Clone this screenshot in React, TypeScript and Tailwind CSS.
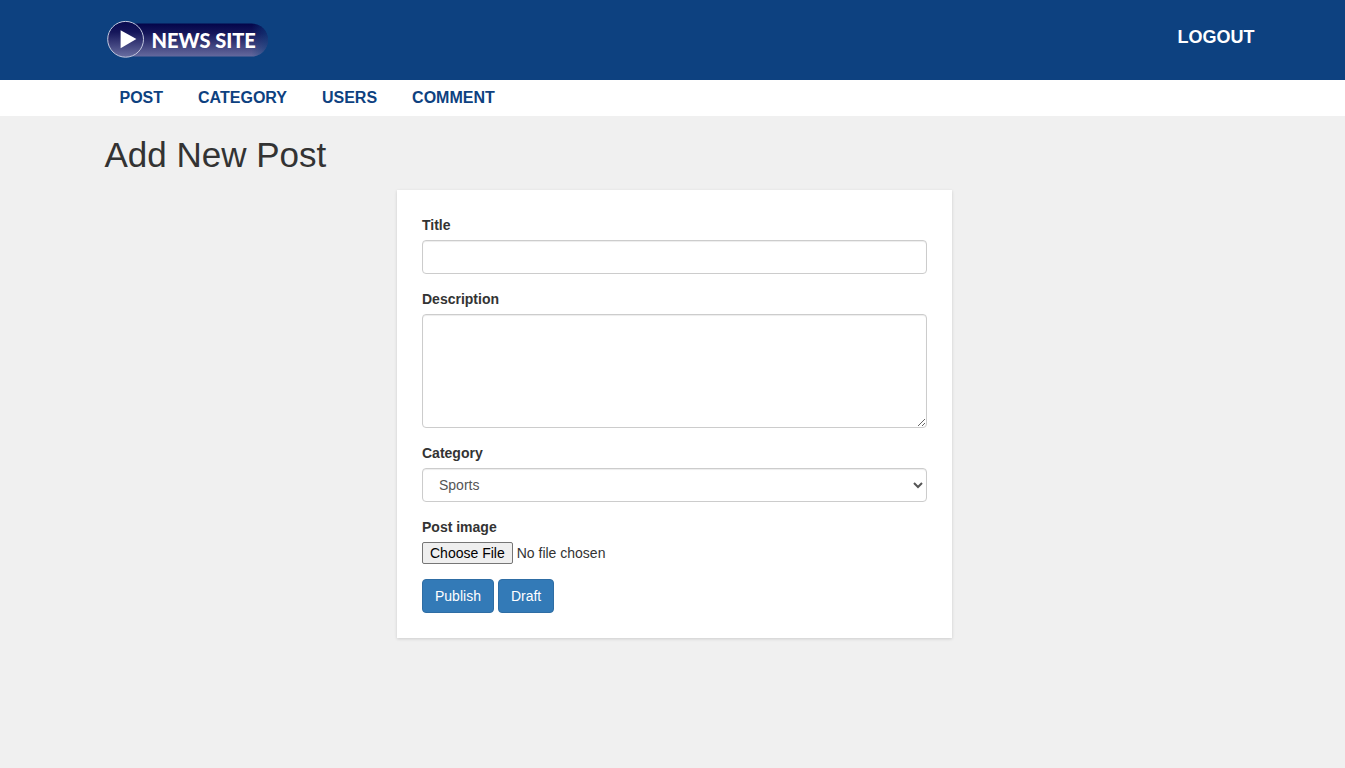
import { useState } from "react";

const navLinks = ["Post", "Category", "Users", "Comment"];

const field =
  "block w-full rounded-sm border border-[#cccccc] bg-white text-sm leading-5 text-[#555555] shadow-[inset_0_1px_1px_rgba(0,0,0,0.075)] outline-none focus:border-[#66afe9]";
const label = "mb-[5px] block w-fit text-sm leading-5 font-bold";
const button =
  "rounded-sm border border-[#2e6da4] bg-[#337ab7] px-3 py-1.5 text-sm leading-5 text-white hover:bg-[#286090]";

function Logo() {
  return (
    <a href="#home" className="relative ml-0.5 block h-[38px] w-[162px]">
      <svg viewBox="0 0 162 38" className="block h-full w-full" aria-hidden="true">
        <defs>
          <linearGradient id="pill" x1="0" y1="0" x2="0" y2="1">
            <stop offset="0" stopColor="#03054a" />
            <stop offset="0.3" stopColor="#15165a" />
            <stop offset="1" stopColor="#656a9e" />
          </linearGradient>
          <linearGradient id="edge" x1="0" y1="0" x2="1" y2="0">
            <stop offset="0" stopColor="#0d4180" stopOpacity="0" />
            <stop offset="1" stopColor="#0d4180" stopOpacity="0.6" />
          </linearGradient>
          <linearGradient id="disc" x1="0" y1="0" x2="0" y2="1">
            <stop offset="0" stopColor="#08094e" />
            <stop offset="0.3" stopColor="#15165a" />
            <stop offset="1" stopColor="#6a6fa2" />
          </linearGradient>
        </defs>
        <rect x="12" y="3.5" width="149" height="33" rx="16.5" fill="url(#pill)" />
        <path d="M144.5 3.5 A16.5 16.5 0 0 1 144.5 36.5 Z" fill="url(#edge)" />
        <circle cx="18.6" cy="19.3" r="17.9" fill="url(#disc)" stroke="#c3c9df" strokeWidth="1" />
        <path d="M13.6 10.2 L29.4 19 L13.6 28.2 Z" fill="#ffffff" />
      </svg>
      <span className="absolute top-1 left-[45px] font-['Lato',sans-serif] text-xl leading-8 font-black whitespace-nowrap text-white">
        NEWS SITE
      </span>
    </a>
  );
}

export default function App() {
  const [title, setTitle] = useState("");
  const [description, setDescription] = useState("");

  return (
    <div className="min-h-screen bg-[#f0f0f0] font-['Liberation_Sans',Arial,sans-serif] text-sm leading-5 text-[#333333]">
      <header className="bg-[#0d4180] pl-1">
        <div className="mx-auto flex h-20 max-w-[1170px] items-start justify-between px-[15px] pt-5">
          <Logo />
          <a
            href="#logout"
            className="-mr-2.5 pt-[5px] text-lg leading-6 font-bold text-white uppercase"
          >
            Logout
          </a>
        </div>
      </header>

      <nav className="bg-white pl-1">
        <ul className="mx-auto flex max-w-[1170px] flex-wrap gap-[5px] px-[15px]">
          {navLinks.map((name) => (
            <li key={name}>
              <a
                href={`#${name.toLowerCase()}`}
                className="block px-[15px] py-2 text-base leading-5 font-bold text-[#0d4180] uppercase"
              >
                {name}
              </a>
            </li>
          ))}
        </ul>
      </nav>

      <main className="pl-1">
        <div className="mx-auto max-w-[1170px] px-[15px] pt-5 pb-10">
          <h1 className="mb-4 text-[35px] leading-[38px] font-normal">Add New Post</h1>
          <form
            className="mx-auto max-w-[555px] bg-white p-[25px] shadow-[0_1px_3px_rgba(0,0,0,0.15)]"
            onSubmit={(e) => e.preventDefault()}
          >
            <div className="mb-[15px]">
              <label htmlFor="title" className={label}>
                Title
              </label>
              <input
                id="title"
                type="text"
                value={title}
                onChange={(e) => setTitle(e.target.value)}
                className={`${field} px-3 py-1.5`}
              />
            </div>
            <div className="mb-[15px]">
              <label htmlFor="description" className={label}>
                Description
              </label>
              <textarea
                id="description"
                rows={5}
                value={description}
                onChange={(e) => setDescription(e.target.value)}
                className={`${field} resize px-3 py-1.5`}
              />
            </div>
            <div className="mb-[15px]">
              <label htmlFor="category" className={label}>
                Category
              </label>
              <select id="category" defaultValue="Sports" className={`${field} h-[34px] px-3 py-1.5`}>
                <option>Sports</option>
                <option>Politics</option>
                <option>Entertainment</option>
              </select>
            </div>
            <div className="mb-[15px]">
              <label htmlFor="image" className={label}>
                Post image
              </label>
              <input
                id="image"
                type="file"
                className="block h-[22px] w-full text-sm leading-5 file:me-1 file:h-[22px] file:rounded-xs file:border file:border-solid file:border-[#767676] file:bg-[#efefef] file:px-[7px] file:text-black"
              />
            </div>
            <div className="flex gap-1">
              <button type="submit" className={button}>
                Publish
              </button>
              <button type="button" className={button}>
                Draft
              </button>
            </div>
          </form>
        </div>
      </main>
    </div>
  );
}
